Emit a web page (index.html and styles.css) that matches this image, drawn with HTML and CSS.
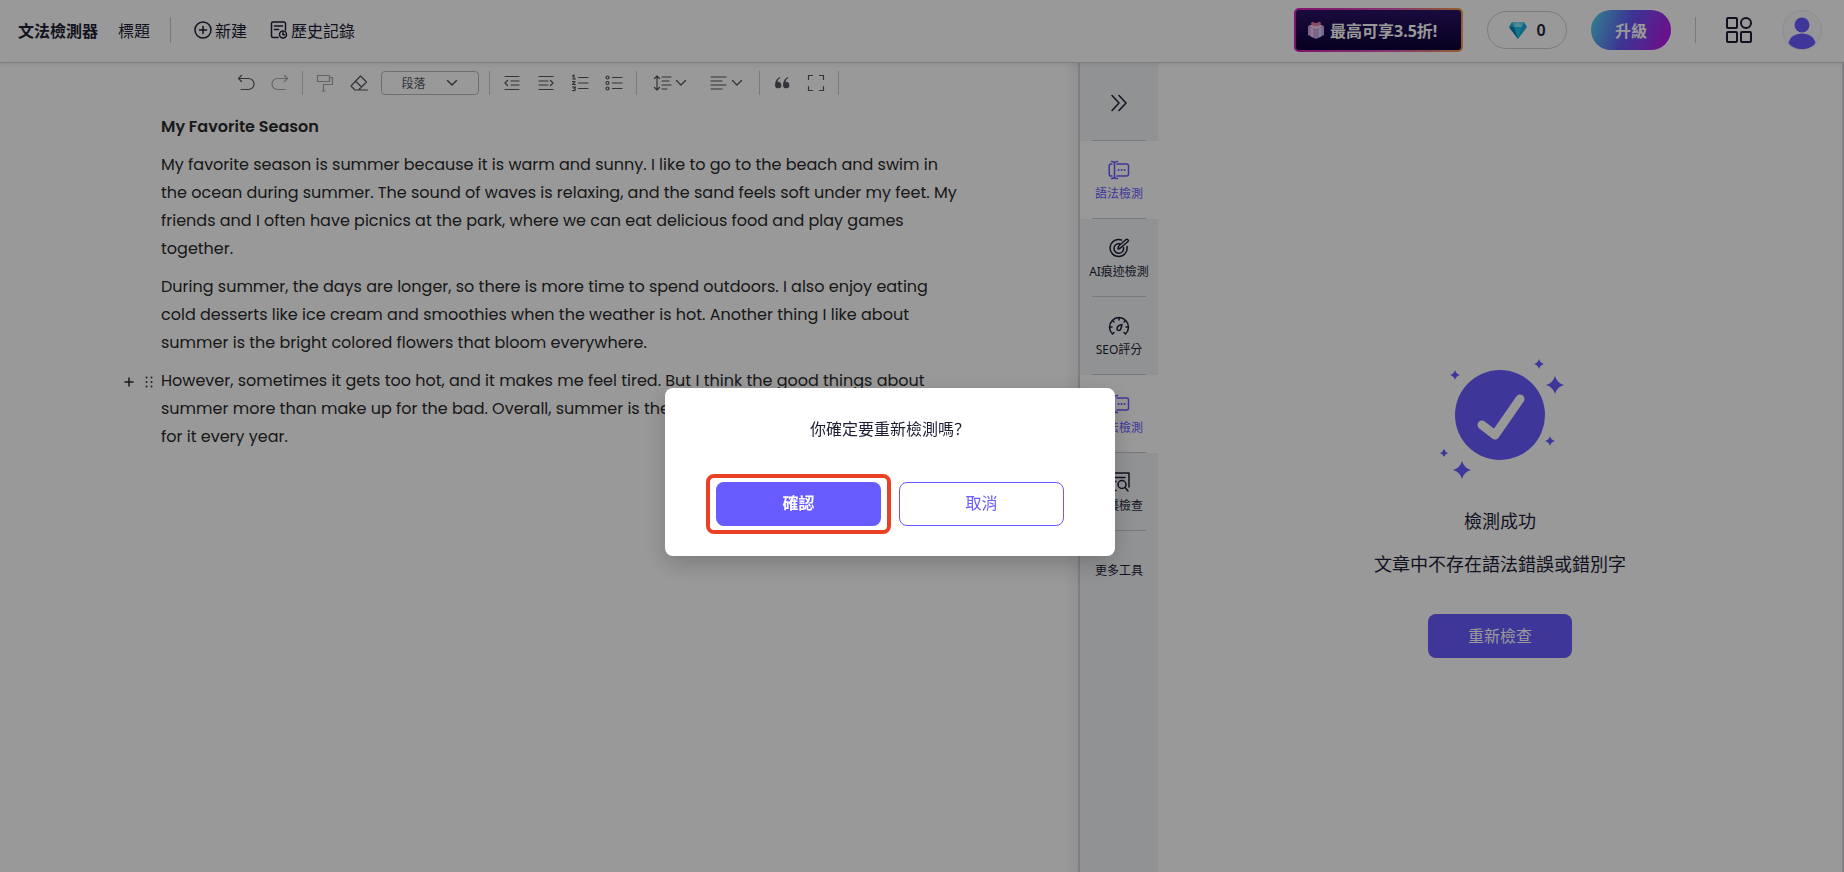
FILE: index.html
```html
<!DOCTYPE html>
<html lang="zh-Hant">
<head>
<meta charset="utf-8">
<meta name="viewport" content="width=device-width, initial-scale=1">
<title>文法檢測器</title>
<link rel="stylesheet" href="styles.css">
</head>
<body>
<svg class="defs" width="0" height="0" aria-hidden="true">
  <symbol id="i-chevron" viewBox="0 0 12 12"><path d="M1.500 3.500 6 8l4.500-4.500"/></symbol>
  <symbol id="i-grammar" viewBox="0 0 22 20"><path d="M6.500 3v14M3.500 1.500c1.800 0 3 .4 3 1.800M9.500 1.500c-1.800 0-3 .4-3 1.800M3.500 18.500c1.800 0 3-.4 3-1.800M9.500 18.500c-1.800 0-3-.4-3-1.800M4 4H3a1.800 1.800 0 0 0-1.800 1.800v8.400A1.800 1.800 0 0 0 3 16h1M9 4h9.500a2 2 0 0 1 2 2v8a2 2 0 0 1-2 2H9"/><path d="M10.500 10h.1M13.500 10h.1M16.500 10h.1" stroke-width="2"/></symbol>
</svg>

<header class="header">
  <div class="header-group">
    <h1 class="brand">文法檢測器</h1>
    <span class="doc-title">標題</span>
    <span class="divider header-divider"></span>
    <button class="header-button" type="button">
      <svg class="icon" width="18" height="18" viewBox="0 0 18 18"><circle cx="9" cy="9" r="8"/><path d="M9 5.500v7M5.500 9h7"/></svg>新建
    </button>
    <button class="header-button" type="button">
      <svg class="icon" width="18" height="18" viewBox="0 0 18 18"><path d="M8 16.500H3A1.500 1.500 0 0 1 1.500 15V2.500A1.500 1.500 0 0 1 3 1h11a1.500 1.500 0 0 1 1.500 1.500V9M4.500 5h8M4.500 8.500h4"/><circle cx="13" cy="13.500" r="3.500"/><path d="M13 11.800v1.900h1.600"/></svg>歷史記錄
    </button>
  </div>
  <div class="header-group header-actions">
    <a class="promo" href="#">
      <svg width="20" height="20" viewBox="0 0 18 20"><path d="M1 6 9 3l8 3-8 4z" fill="#f5cdf0"/><path d="M1 6v9l8 4V10z" fill="#dba6e6"/><path d="m17 6v9l-8 4V10z" fill="#b9b2f8"/><path d="m4 7.300 0 9.200 2 1V8.400zM14 7.300v9.200l-2 1V8.400z" fill="#ffd0e6"/><path d="M9 6C5 6 3 4 4.500 2.500S8 2.500 9 5c1-3 3-4 4.500-2.500S13 6 9 6z" fill="#ec7a9c"/></svg>
      最高可享3.5折!
    </a>
    <button class="credits" type="button">
      <svg width="20" height="18" viewBox="0 0 20 18"><path d="M4 1h12l3 5-9 12L1 6z" fill="#18a9dc"/><path d="m4 1 2 5h8l2-5z" fill="#62dcf2"/><path d="m6 6 4-5 4 5z" fill="#8ae8f8"/><path d="m6 6 4 12 4-12z" fill="#21c5e9"/><path d="M1 6h5l4 12z" fill="#0780bd"/></svg>
      0
    </button>
    <button class="upgrade" type="button">升級</button>
    <span class="divider header-divider"></span>
    <button class="plain" type="button" aria-label="應用程式">
      <svg class="icon apps" width="26" height="28" viewBox="0 0 26 28"><rect x="1" y="2" width="10" height="10" rx="1"/><circle cx="20" cy="7" r="5"/><rect x="1" y="16" width="10" height="10" rx="1"/><rect x="15" y="16" width="10" height="10" rx="1"/></svg>
    </button>
    <button class="avatar" type="button" aria-label="帳戶">
      <svg width="28" height="32" viewBox="0 0 28 32" fill="#685bff"><circle cx="14" cy="8" r="7.500"/><path d="M.5 26C2 20 7 16.500 14 16.500S26 20 27.500 26c-3 4-8 6-13.500 6S3.500 30 .5 26z"/></svg>
    </button>
  </div>
</header>

<main class="workspace">
  <section class="editor">
    <div class="toolbar" role="toolbar" aria-label="格式">
      <button class="tool" type="button" aria-label="復原"><svg class="icon" width="18" height="18" viewBox="0 0 18 18"><path d="M2 4.500h9.500a5 5 0 0 1 0 11H4M4.500 1.500l-3 3 3 3"/></svg></button>
      <button class="tool faded" type="button" aria-label="重做"><svg class="icon" width="18" height="18" viewBox="0 0 18 18"><path d="M16 4.500H6.500a5 5 0 0 0 0 11H14M13.500 1.500l3 3-3 3"/></svg></button>
      <span class="divider"></span>
      <button class="tool faded" type="button" aria-label="複製格式"><svg class="icon" width="18" height="18" viewBox="0 0 18 18"><path d="M1.500 1.500h12v6h-12zM13.500 3.500h3v7H7.500V17M6 17h3"/></svg></button>
      <button class="tool" type="button" aria-label="清除格式"><svg class="icon" width="18" height="18" viewBox="0 0 18 18"><path d="m10.500 2 6 6-8 8H5l-4-4zM5.500 7l6 6M7 16h10.500"/></svg></button>
      <div class="style-select">
        <select aria-label="段落樣式"><option>段落</option></select>
        <svg class="icon" width="12" height="12"><use href="#i-chevron"/></svg>
      </div>
      <span class="divider"></span>
      <button class="tool" type="button" aria-label="減少縮排"><svg class="icon" width="16" height="16" viewBox="0 0 16 16"><path d="M1 1.500h14M7 6h8M7 10h8M1 14.500h14M3.500 5.500 1 8l2.500 2.500"/></svg></button>
      <button class="tool" type="button" aria-label="增加縮排"><svg class="icon" width="16" height="16" viewBox="0 0 16 16"><path d="M1 1.500h14M1 6h9M1 10h9M1 14.500h14M12.500 5.500 15 8l-2.500 2.500"/></svg></button>
      <button class="tool" type="button" aria-label="編號清單"><svg class="icon" width="18" height="18" viewBox="0 0 18 18"><path d="M7.500 3.500H17M7.500 9H17M7.500 14.500H17M1.500 2 3 1v4M1.500 5h3M1.500 7.500h2.500l-2.500 3h3M1.500 13h3L3 14.500c2 0 2 2.500-1.500 2"/></svg></button>
      <button class="tool" type="button" aria-label="項目清單"><svg class="icon" width="18" height="18" viewBox="0 0 18 18"><path d="M7.500 3.500H17M7.500 9H17M7.500 14.500H17"/><circle cx="2.500" cy="3.500" r="1.500"/><circle cx="2.500" cy="9" r="1.500"/><circle cx="2.500" cy="14.500" r="1.500"/></svg></button>
      <span class="divider"></span>
      <button class="tool wide" type="button" aria-label="行高"><svg class="icon" width="18" height="16" viewBox="0 0 18 16"><path d="M4 1v14M1.500 3.500 4 1l2.500 2.500M1.500 12.500 4 15l2.500-2.500M9 2h9M9 6h7M9 10h9M9 14h5"/></svg><svg class="icon" width="12" height="12"><use href="#i-chevron"/></svg></button>
      <button class="tool wide" type="button" aria-label="對齊"><svg class="icon" width="18" height="16" viewBox="0 0 18 16"><path d="M2 2h15M2 6h11M2 10h15M2 14h11"/></svg><svg class="icon" width="12" height="12"><use href="#i-chevron"/></svg></button>
      <span class="divider"></span>
      <button class="tool" type="button" aria-label="引用"><svg width="16" height="14" viewBox="0 0 16 14"><path d="M6 1C3 2.500 1 5 1 9.200A3.200 3.200 0 1 0 3.500 6C3.500 4 5 2.500 6.500 1.700zM14 1C11 2.500 9 5 9 9.200A3.200 3.200 0 1 0 11.500 6c0-2 1.500-3.500 3-4.300z" fill="#55555f"/></svg></button>
      <button class="tool" type="button" aria-label="全螢幕"><svg class="icon" width="18" height="18" viewBox="0 0 18 18"><path d="M1.500 5.500v-4h4M12.500 1.500h4v4M16.500 12.500v4h-4M5.500 16.500h-4v-4"/></svg></button>
      <span class="divider"></span>
    </div>

    <article class="document" lang="en">
      <h2>My Favorite Season</h2>
      <p>My favorite season is summer because it is warm and sunny. I like to go to the beach and swim in<br>the ocean during summer. The sound of waves is relaxing, and the sand feels soft under my feet. My<br>friends and I often have picnics at the park, where we can eat delicious food and play games<br>together.</p>
      <p>During summer, the days are longer, so there is more time to spend outdoors. I also enjoy eating<br>cold desserts like ice cream and smoothies when the weather is hot. Another thing I like about<br>summer is the bright colored flowers that bloom everywhere.</p>
      <div class="block">
        <div class="block-handle">
          <svg class="icon" width="10" height="10" viewBox="0 0 10 10"><path d="M5 1v8M1 5h8"/></svg>
          <svg width="8" height="12" viewBox="0 0 8 12" fill="#3a3a44"><circle cx="1.500" cy="1.500" r="1"/><circle cx="6.500" cy="1.500" r="1"/><circle cx="1.500" cy="6" r="1"/><circle cx="6.500" cy="6" r="1"/><circle cx="1.500" cy="10.500" r="1"/><circle cx="6.500" cy="10.500" r="1"/></svg>
        </div>
        <p>However, sometimes it gets too hot, and it makes me feel tired. But I think the good things about<br>summer more than make up for the bad. Overall, summer is the<br>for it every year.</p>
      </div>
    </article>
  </section>

  <nav class="rail" aria-label="工具">
    <button class="rail-item" type="button" aria-label="收合"><svg class="icon" width="18" height="18" viewBox="0 0 18 18"><path d="m2 1.500 7 7.500-7 7.500M9 1.500 16 9l-7 7.500"/></svg></button>
    <button class="rail-item active" type="button"><svg class="icon" width="22" height="20"><use href="#i-grammar"/></svg>語法檢測</button>
    <button class="rail-item" type="button"><svg class="icon" width="22" height="20" viewBox="0 0 22 20"><path d="M13.500 2A8.500 8.500 0 1 0 19 8.500M11.500 5.700a4.800 4.800 0 1 0 4 3.800M10 11c0-2 0-2.500 1.500-3.800L18 1.500c1.500-1 3 .8 2 2L13 9.500c-1 1-1.500 1.300-3 1.500z"/></svg>AI痕迹檢測</button>
    <button class="rail-item" type="button"><svg class="icon" width="22" height="20" viewBox="0 0 22 20"><path d="M4.500 18a9.500 9.500 0 1 1 13 0M11 1.500v2.500M1.500 11H4M18 11h2.500M4.500 4.500 6 6M17.500 4.500 16 6M4.500 18l1.500-1.500M17.500 18 16 16.500M14 8.500c-3 .5-5 2-5 4.500 0 1.500 2.500 2 3.500.5.700-1.200 1-3 1.500-5z"/></svg>SEO評分</button>
    <button class="rail-item active" type="button"><svg class="icon" width="22" height="20"><use href="#i-grammar"/></svg>語法檢測</button>
    <button class="rail-item" type="button"><svg class="icon" width="22" height="20" viewBox="0 0 22 20"><path d="M8 18.500H2V1h19v14M5 5.500h12M5 9.500h3"/><circle cx="14" cy="12.500" r="4"/><path d="m17 15.500 3 3.500"/></svg>抄襲檢查</button>
    <button class="rail-item" type="button">更多工具</button>
  </nav>

  <aside class="result">
    <svg width="126" height="124" viewBox="0 1 126 124" fill="#685bff">
      <circle cx="63" cy="57" r="45"/>
      <path d="m45 67 13 10 25-36" fill="none" stroke="#fff" stroke-width="9" stroke-linecap="round" stroke-linejoin="round"/>
      <path d="M118 18q2 7 9 9-7 2-9 9-2-7-9-9 7-2 9-9zM25 103q2 7 9 9-7 2-9 9-2-7-9-9 7-2 9-9zM18 12q1 4 5 5-4 1-5 5-1-4-5-5 4-1 5-5zM102 1q1 4 5 5-4 1-5 5-1-4-5-5 4-1 5-5zM113 78q1 4 5 5-4 1-5 5-1-4-5-5 4-1 5-5zM7 91q1 3 4 4-3 1-4 4-1-3-4-4 3-1 4-4z"/>
    </svg>
    <h2>檢測成功</h2>
    <p>文章中不存在語法錯誤或錯別字</p>
    <button class="recheck" type="button">重新檢查</button>
  </aside>
</main>

<div class="overlay">
  <div class="dialog" role="dialog" aria-modal="true" aria-labelledby="dialog-title">
    <p id="dialog-title" lang="zh-Hans">你確定要重新檢測嗎？</p>
    <div class="dialog-actions">
      <div class="highlight"><button class="confirm" type="button">確認</button></div>
      <button class="cancel" type="button">取消</button>
    </div>
  </div>
</div>
</body>
</html>
```

FILE: styles.css
```css
* { box-sizing: border-box; }

body {
  margin: 0;
  height: 100vh;
  display: flex;
  flex-direction: column;
  overflow: hidden;
  background: #fff;
  color: #1d1d35;
  font-family: "Noto Sans", "Noto Sans CJK TC", sans-serif;
  font-size: 16px;
}

h1, h2, p { margin: 0; font-size: inherit; font-weight: inherit; }

button, select {
  font: inherit;
  color: inherit;
  background: none;
  border: 0;
  padding: 0;
}

.defs { position: absolute; }

.icon {
  fill: none;
  stroke: currentColor;
  stroke-width: 1.5;
  stroke-linecap: round;
  stroke-linejoin: round;
  overflow: visible;
}

.divider { width: 1px; height: 24px; background: #ccc; }

/* Header */
.header {
  display: flex;
  justify-content: space-between;
  align-items: center;
  height: 63px;
  flex: none;
  padding: 0 22px 2px 18px;
  border-bottom: 1px solid #d2d2d6;
  box-shadow: 0 1px 6px rgba(0, 0, 0, 0.08);
  z-index: 1;
}

.header-group { display: flex; align-items: center; gap: 20px; }
.header-divider { height: 26px; }
.header-actions { gap: 24px; }
.brand { font-weight: 700; }

.header-button {
  display: flex;
  align-items: center;
  gap: 3px;
  margin-left: 3px;
}

.promo {
  display: flex;
  align-items: center;
  gap: 4px;
  width: 169px;
  height: 44px;
  padding-left: 10px;
  border: 2px solid transparent;
  border-radius: 5px;
  background:
    linear-gradient(#2b1366, #0c0038) padding-box,
    linear-gradient(90deg, #d61fb4, #e05bb8 60%, #f0a14c) border-box;
  color: #fff;
  font-weight: 700;
  text-decoration: none;
  white-space: nowrap;
}

.credits {
  display: flex;
  align-items: center;
  justify-content: center;
  gap: 8px;
  width: 80px;
  height: 38px;
  border: 1px solid #d0d0d6;
  border-radius: 19px;
  font-weight: 600;
}

.upgrade {
  width: 80px;
  height: 40px;
  border-radius: 20px;
  background: linear-gradient(110deg, #50dcf0, #6459f5 45%, #b01ee8 90%);
  color: #fff;
  font-weight: 700;
}

.plain { display: flex; margin-left: 6px; }
.apps { stroke-width: 2; }

.avatar {
  display: flex;
  align-items: center;
  justify-content: center;
  width: 40px;
  height: 40px;
  margin-left: 6px;
  padding-top: 6px;
  border-radius: 50%;
  background: #fafaff;
  border: 1px solid #ebebf2;
}

/* Main columns */
.workspace { flex: 1; display: flex; min-height: 0; }

.editor {
  flex: 1;
  border-right: 2px solid #d2d2d6;
  box-shadow: inset -14px 0 14px -10px rgba(0, 0, 0, 0.08);
}

.toolbar {
  display: flex;
  align-items: center;
  justify-content: center;
  gap: 10px;
  height: 40px;
  padding-right: 6px;
  color: #55555f;
}

.tool {
  display: flex;
  align-items: center;
  justify-content: center;
  gap: 4px;
  width: 24px;
  height: 24px;
}
.tool .icon { stroke-width: 1.2; }
.tool.wide { width: 46px; }
.faded { opacity: 0.5; }

.style-select { position: relative; display: flex; width: 98px; height: 24px; }
.style-select select {
  appearance: none;
  width: 100%;
  padding-left: 20px;
  border: 1px solid #b8b8be;
  border-radius: 4px;
  font-size: 12px;
}
.style-select .icon { position: absolute; right: 21px; top: 6px; pointer-events: none; }

.document {
  width: 840px;
  margin: 10px 0 0 161px;
  color: #2a2a2a;
  font-family: Poppins, Inter, sans-serif;
  font-size: 16px;
  line-height: 28px;
}
.document h2 { font-weight: 600; }
.document p { margin-top: 10px; white-space: nowrap; }

.block { position: relative; }
.block-handle {
  position: absolute;
  right: 100%;
  top: 0;
  display: flex;
  align-items: center;
  gap: 11px;
  height: 30px;
  padding-right: 8px;
}

/* Tool rail */
.rail {
  width: 78px;
  display: flex;
  flex-direction: column;
  background: #f2f4f7;
}

.rail-item {
  position: relative;
  display: flex;
  flex-direction: column;
  align-items: center;
  justify-content: center;
  gap: 5px;
  height: 78px;
  padding-top: 2px;
  font-size: 12px;
  line-height: 18px;
  white-space: nowrap;
}
.rail-item:not(:last-child)::after {
  content: "";
  position: absolute;
  left: 12px;
  right: 12px;
  bottom: 0;
  height: 1px;
  background: #c8cad0;
}
.rail-item.active { background: #fff; color: #685bff; }

/* Result panel */
.result {
  flex: 0 1 686px;
  display: flex;
  flex-direction: column;
  align-items: center;
  padding-top: 296px;
  border-right: 2px solid #d8d8dc;
  font-size: 18px;
  line-height: 27px;
}
.result svg { overflow: visible; }
.result h2 { margin-top: 25px; }
.result p { margin-top: 16px; }

.recheck {
  width: 144px;
  height: 44px;
  margin-top: 36px;
  border-radius: 8px;
  background: #685bff;
  color: #fff;
  font-size: 16px;
}

/* Confirmation dialog */
.overlay {
  position: fixed;
  inset: 0;
  z-index: 10;
  background: rgba(0, 0, 0, 0.4);
}

.dialog {
  position: absolute;
  left: 665px;
  top: 388px;
  width: 450px;
  padding: 28px 41px 22px;
  border-radius: 8px;
  background: #fff;
  box-shadow: 0 8px 24px rgba(0, 0, 0, 0.2);
  text-align: center;
  line-height: 24px;
}
.dialog p { font-family: "Noto Sans CJK SC", sans-serif; }

.dialog-actions {
  display: flex;
  align-items: center;
  gap: 8px;
  margin-top: 34px;
}

.highlight {
  display: flex;
  padding: 4px 6px;
  border: 4px solid #ea4126;
  border-radius: 8px;
}

.confirm, .cancel { width: 165px; height: 44px; padding-bottom: 2px; border-radius: 8px; }
.confirm { background: #685bff; color: #fff; font-weight: 700; }
.cancel { border: 1px solid #685bff; color: #685bff; }
```
